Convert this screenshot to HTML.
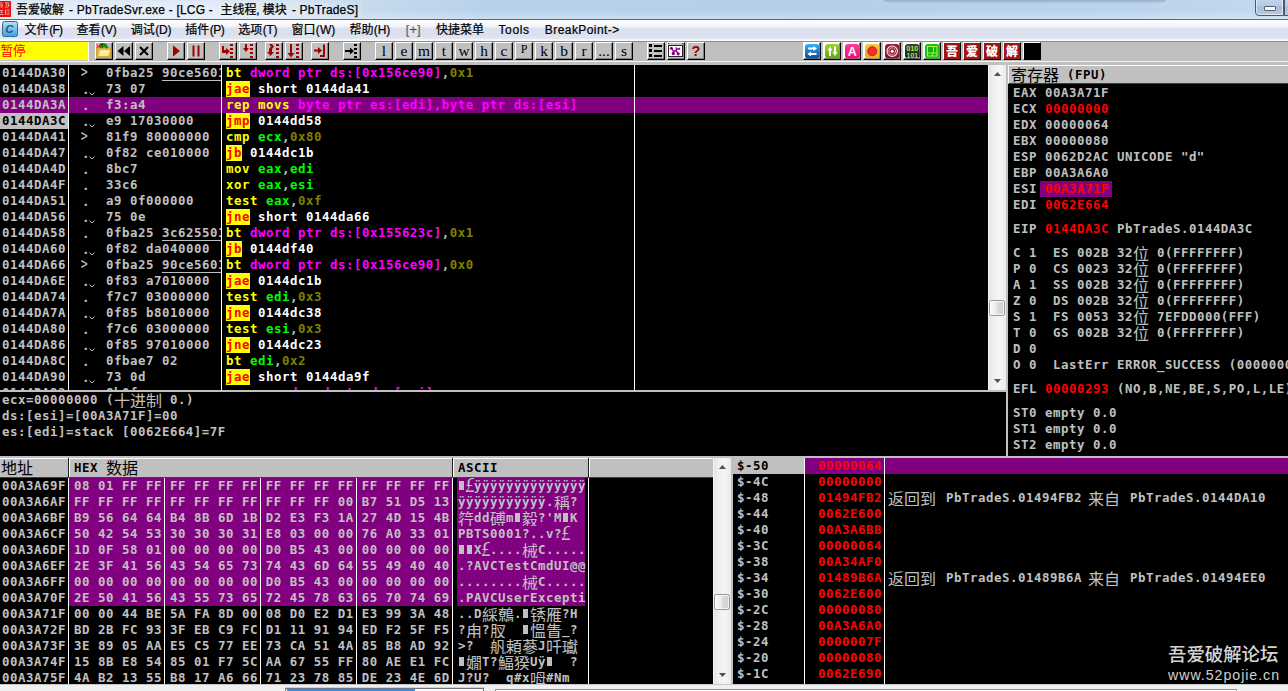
<!DOCTYPE html><html><head><meta charset="utf-8"><title>OllyDbg</title><style>
*{box-sizing:border-box;margin:0;padding:0}
html,body{width:1288px;height:691px;overflow:hidden;background:#c0c0c0}
body{position:relative;font-family:"Liberation Sans","Noto Sans CJK SC",sans-serif}
.abs{position:absolute}
.m{font-family:"DejaVu Sans Mono","Liberation Mono","Noto Sans CJK SC",monospace;font-weight:bold;font-size:12.4px;line-height:16px;white-space:pre;color:#c0c0c0;letter-spacing:0.5346px}
.row{position:absolute;left:0;height:16px;white-space:pre;overflow:hidden}
.cj{font-family:"Noto Sans CJK SC","WenQuanYi Zen Hei",sans-serif;font-weight:400;font-size:16px;display:inline-block;width:16px;text-align:center;line-height:16px;vertical-align:top;letter-spacing:0}
.pane{position:absolute;background:#000;overflow:hidden}
.y{color:#ff0}.mg{color:#f0f}.g{color:#0f0}.o{color:#808000}.w{color:#fff}.r{color:#f00}.k{color:#000}
.j{color:#f00;background:#ff0;display:inline-block;height:16px;vertical-align:top}
.hl{background:#800080}
.vl{position:absolute;width:1px;background:#fff}
.btn{position:absolute;top:42px;width:18px;height:18px;background:#c0c0c0;border:1px solid;border-color:#fff #000 #000 #fff;box-shadow:inset -1px -1px 0 #808080;overflow:hidden}
.btn svg{position:absolute;left:0;top:0}
.wf{background:#fff}
.lb{font-family:"Liberation Serif",serif;font-size:15.4px;line-height:16px;text-align:center;color:#000;width:16px;margin-top:-0.5px}
.sb{position:absolute;background:#f0f0f0}
</style></head><body>
<div class="abs" id="title" style="left:0;top:0;width:1288px;height:19px;background:linear-gradient(180deg,rgba(255,255,255,0) 0,rgba(255,255,255,0) 55%,rgba(255,255,255,.28) 100%),linear-gradient(90deg,#dde8f4 0,#d9e5f3 250px,#c6daee 370px,#b9d2eb 480px,#b4cfea 800px,#b9d3ec 1100px,#c3d9ee 1288px)"></div>
<div class="abs" style="left:884px;top:0;width:282px;height:3px;background:linear-gradient(180deg,rgba(140,160,190,.75),rgba(150,175,205,.25));border-radius:0 0 8px 8px/0 0 3px 3px"></div>
<div class="abs" style="left:0;top:19px;width:1288px;height:1px;background:#5f6a76"></div>
<svg class="abs" style="left:0;top:1px" width="11" height="16" viewBox="0 0 11 16"><rect x="-2" width="13" height="16" rx=".8" fill="#e61212"/><g fill="#f7a8a8" opacity=".9"><path d="M0 1.500h2.500v1H0zM0 3.500h3v1.200H0zM.5 5.500h2.500v1H.5zM5 1.200h4v1H5zM6 2.500h1.200v2H6zM8 2.800h1.200v3H8zM5 5.500h3v1H5zM0 9h3v1H0zM.5 10.500h2v1.500h-2zM0 13h3.500v1H0zM5 8.500h1.200v5.500H5zM7 8.500h2.500v1H7zM7.500 10.500h1.500v1.200H7.500zM7 12.800h2.500v1H7z"/></g></svg>
<div class="abs" style="left:14px;top:1px;width:348px;height:17px;background:radial-gradient(ellipse at center,rgba(255,255,255,.35) 0,rgba(255,255,255,.2) 60%,rgba(255,255,255,0) 100%)"></div>
<div class="abs" style="left:0;white-space:pre;font:12px 'Liberation Sans','Noto Sans CJK SC',sans-serif;top:0;height:20px;line-height:20px;color:#000;-webkit-text-stroke:0.25px #000"><span style="margin-left:16.000px;">吾爱破解</span><span style="margin-left:4.984px;letter-spacing:0.203px;">- PbTradeSvr.exe - [LCG -</span><span style="margin-left:7.500px;">主线程</span><span style="margin-left:-0.216px;">,</span><span style="margin-left:3.056px;">模块</span><span style="margin-left:5.184px;letter-spacing:0.186px;">- PbTradeS]</span></div>
<div class="abs" style="left:1255px;top:-4px;width:29px;height:20px;border:1px solid #4a5868;border-radius:0 0 0 4px;background:linear-gradient(180deg,#c6d8ec 0,#b5cbe4 50%,#a4bddb 51%,#b4cbe5 100%);box-shadow:inset 0 0 0 1px rgba(255,255,255,.6)"></div>
<div class="abs" style="left:1284px;top:-4px;width:8px;height:20px;border:1px solid #4a5868;background:linear-gradient(180deg,#c6d8ec 0,#b5cbe4 50%,#a4bddb 51%,#b4cbe5 100%)"></div>
<div class="abs" style="left:1264px;top:6px;width:12px;height:5px;background:#fff;border:1px solid #555e6a;border-radius:1px"></div>
<div class="abs menu" style="left:0;top:20px;width:1288px;height:19px;background:linear-gradient(180deg,#fff 0,#f1f3f9 7px,#dde0ee 8px,#dcdfed 15px,#e6e8f3 19px)">
<svg class="abs" style="left:2px;top:1px" width="16" height="17" viewBox="0 0 16 17"><defs><linearGradient id="cg" x1="0" y1="0" x2="0" y2="1"><stop offset="0" stop-color="#b4e2fa"/><stop offset="1" stop-color="#3d9fdc"/></linearGradient></defs><rect x=".5" y=".5" width="15" height="15" rx="2" fill="url(#cg)" stroke="#2a6f9f"/><text x="7.500" y="12" font-family="Liberation Sans" font-weight="bold" font-style="italic" font-size="11.500" text-anchor="middle" fill="#2c5878">C</text></svg>
<div class="abs" style="left:0;white-space:pre;font:12px 'Liberation Sans','Noto Sans CJK SC',sans-serif;top:1px;height:19px;line-height:19px;color:#000;-webkit-text-stroke:0.2px #000"><span style="margin-left:24.500px;">文件</span><span style="margin-left:0.784px;letter-spacing:-0.776px;">(F)</span><span style="margin-left:14.200px;">查看</span><span style="margin-left:0.584px;letter-spacing:-0.167px;">(V)</span><span style="margin-left:14.100px;">调试</span><span style="margin-left:0.584px;letter-spacing:-0.224px;">(D)</span><span style="margin-left:14.000px;">插件</span><span style="margin-left:0.384px;letter-spacing:-0.433px;">(P)</span><span style="margin-left:13.900px;">选项</span><span style="margin-left:0.484px;letter-spacing:-0.243px;">(T)</span><span style="margin-left:14.100px;">窗口</span><span style="margin-left:0.384px;letter-spacing:0.091px;">(W)</span><span style="margin-left:14.200px;">帮助</span><span style="margin-left:0.084px;letter-spacing:-0.057px;">(H)</span><span style="margin-left:15.500px;letter-spacing:0.604px;color:#808080;">[+]</span><span style="margin-left:14.700px;">快捷菜单</span><span style="margin-left:14.584px;letter-spacing:0.637px;">Tools</span><span style="margin-left:15.200px;letter-spacing:0.425px;">BreakPoint-&gt;</span></div>
</div>
<div class="abs" style="left:0;top:39px;width:1288px;height:2px;background:linear-gradient(180deg,#eff0f7,#fff)"></div>
<div class="abs" style="left:0;top:41px;width:1288px;height:24px;background:#c0c0c0"></div>
<div class="abs" style="left:0;top:41px;width:1288px;height:1px;background:#8c8c8c"></div>
<div class="abs" style="left:0;top:61px;width:1288px;height:1px;background:#f4f4f4"></div>
<div class="abs" style="left:0;top:42px;width:88px;height:18px;background:#ff0"></div>
<div class="abs" style="left:88px;top:42px;width:1px;height:19px;background:#fff"></div>
<div class="abs" style="left:0.5px;top:43px;height:18px;line-height:17px;font-size:12.6px;color:#f00;letter-spacing:0;white-space:pre">暂停</div>
<div class="btn " style="left:95px"><svg width="16" height="16" viewBox="0 0 16 16"><defs><linearGradient id="fo" x1="0" y1="0" x2="0" y2="1"><stop offset="0" stop-color="#fff8c0"/><stop offset="1" stop-color="#fbe27a"/></linearGradient></defs><rect x=".5" y="4.500" width="14.500" height="9.800" rx="1.500" fill="#e2b442" stroke="#c89a2c" stroke-width=".8"/><path d="M4.200 7.300h9.800l-2 5.800H2.200z" fill="url(#fo)"/><path d="M3 2.300C3 .6 4.500 0 6 .3c2.500-.8 6 .6 6 4.900H9.300C9.300 4 8.600 3.700 7.500 4.300c-.6 1-2 1.300-3 .6C3.500 4.400 3 3.500 3 2.300z" fill="#0e900e"/><rect x="5.200" y="1" width="1.200" height="1.200" fill="#000"/><path d="M5 3.800L2 3.400M2.200 3.400L.6 1.400M2.200 3.400L.6 5.200" stroke="#f00" stroke-width="1" fill="none"/></svg></div>
<div class="btn " style="left:115px"><svg width="16" height="16" viewBox="0 0 16 16"><path d="M7.5 3v10L1.5 8zM14 3v10L8 8z" fill="#000"/></svg></div>
<div class="btn " style="left:135px"><svg width="16" height="16" viewBox="0 0 16 16"><path d="M4 4l8 8M12 4l-8 8" stroke="#000" stroke-width="2"/></svg></div>
<div class="btn " style="left:167px"><svg width="16" height="16" viewBox="0 0 16 16"><path d="M5 2.5v11L12 8z" fill="#a00000"/></svg></div>
<div class="btn " style="left:187px"><svg width="16" height="16" viewBox="0 0 16 16"><rect x="4.5" y="2.5" width="2" height="11" fill="#a00000"/><rect x="9.5" y="2.5" width="2" height="11" fill="#a00000"/></svg></div>
<div class="btn " style="left:219px"><svg width="16" height="16" viewBox="0 0 16 16"><g fill="#a00000"><rect x="10" y="1" width="3" height="2"/><rect x="10" y="5" width="3" height="2"/><rect x="10" y="9" width="3" height="2"/><rect x="10" y="13" width="3" height="2"/></g><path d="M2 3h2v4h2V5l4 3.5L6 12v-2H2z" fill="#a00000"/></svg></div>
<div class="btn " style="left:239px"><svg width="16" height="16" viewBox="0 0 16 16"><g fill="#a00000"><rect x="10" y="1" width="3" height="2"/><rect x="10" y="5" width="3" height="2"/><rect x="10" y="9" width="3" height="2"/><rect x="10" y="13" width="3" height="2"/></g><path d="M5 1h2v4h2L6 9 3 5h2z" fill="#a00000"/></svg></div>
<div class="btn " style="left:265px"><svg width="16" height="16" viewBox="0 0 16 16"><g fill="#a00000"><rect x="10" y="1" width="3" height="2"/><rect x="10" y="5" width="3" height="2"/><rect x="10" y="9" width="3" height="2"/><rect x="10" y="13" width="3" height="2"/></g><path d="M3 1h3l2 2.5L6 6v3h2l-3.5 4L1 9h2V6l2-2.5z" fill="#a00000"/></svg></div>
<div class="btn " style="left:285px"><svg width="16" height="16" viewBox="0 0 16 16"><g fill="#a00000"><rect x="10" y="1" width="3" height="2"/><rect x="10" y="5" width="3" height="2"/><rect x="10" y="9" width="3" height="2"/><rect x="10" y="13" width="3" height="2"/></g><path d="M4 1h2v9h2.5L5 14.5 1.500 10H4z" fill="#a00000"/></svg></div>
<div class="btn " style="left:311px"><svg width="16" height="16" viewBox="0 0 16 16"><path d="M2 6.500h4v-2.500L10 7.500 6 11v-2.500H2z" fill="#a00000"/><path d="M12 1.500v11.500h-4" stroke="#a00000" stroke-width="2" fill="none"/></svg></div>
<div class="btn " style="left:343px"><svg width="16" height="16" viewBox="0 0 16 16"><g fill="#000"><rect x="10" y="1" width="3" height="2"/><rect x="10" y="5" width="3" height="2"/><rect x="10" y="9" width="3" height="2"/><rect x="10" y="13" width="3" height="2"/></g><path d="M1 7h5V4.500L10 8 6 11.500V9H1z" fill="#000"/></svg></div>
<div class="btn " style="left:375px"><div class="lb">l</div></div>
<div class="btn " style="left:395px"><div class="lb">e</div></div>
<div class="btn " style="left:415px"><div class="lb">m</div></div>
<div class="btn " style="left:435px"><div class="lb">t</div></div>
<div class="btn " style="left:455px"><div class="lb">w</div></div>
<div class="btn " style="left:475px"><div class="lb">h</div></div>
<div class="btn " style="left:495px"><div class="lb">c</div></div>
<div class="btn " style="left:515px"><div class="lb" style="font-size:12px;line-height:13px">P</div></div>
<div class="btn " style="left:535px"><div class="lb">k</div></div>
<div class="btn " style="left:555px"><div class="lb">b</div></div>
<div class="btn " style="left:575px"><div class="lb">r</div></div>
<div class="btn " style="left:595px"><div class="lb">...</div></div>
<div class="btn " style="left:615px"><div class="lb">s</div></div>
<div class="btn " style="left:647px"><svg width="16" height="16" viewBox="0 0 16 16"><g fill="#000"><rect x="1" y="1" width="3" height="3"/><rect x="6" y="2" width="8" height="2"/><rect x="1" y="6" width="3" height="3"/><rect x="6" y="7" width="8" height="2"/><rect x="1" y="11" width="3" height="3"/><rect x="6" y="12" width="8" height="2"/></g></svg></div>
<div class="btn " style="left:667px"><svg width="16" height="16" viewBox="0 0 16 16"><rect x="0" y="0" width="1" height="1" fill="#303030"/><rect x="14" y="0" width="1" height="1" fill="#303030"/><rect x=".5" y="2.500" width="14" height="11" fill="#fff" stroke="#282828"/><g fill="#8c008c"><circle cx="3.400" cy="5.200" r="1.500"/><rect x="3.800" y="9" width="3" height="3"/><circle cx="10.200" cy="10.800" r="1.600"/></g><path d="M3.400 5.200L5.300 8H8.300M5.300 8v2M8.300 8V4.200M8.300 6h3.200V4.800M8.300 8l2 2.800" stroke="#8c008c" stroke-width="1.300" fill="none"/></svg></div>
<div class="btn " style="left:687px"><div style="font:bold 14.500px/16px 'Liberation Sans',sans-serif;color:#a00000;text-align:center;width:16px;margin-top:0">?</div></div>
<div class="btn wf" style="left:803px"><svg width="16" height="16" viewBox="0 0 16 16"><defs><linearGradient id="b1" x1="0" y1="0" x2="0" y2="1"><stop offset="0" stop-color="#2fb4f4"/><stop offset="1" stop-color="#0a4a98"/></linearGradient></defs><rect x="1" y="1" width="14.500" height="14.500" rx="3" fill="url(#b1)"/><path d="M4 4.500h5.500V3L13 5.500 9.500 8V6.500H4zM12.500 10H7V8.500L3.500 11 7 13.500V12h5.500z" fill="#fff"/></svg></div>
<div class="btn wf" style="left:823px"><svg width="16" height="16" viewBox="0 0 16 16"><defs><linearGradient id="b2" x1="0" y1="0" x2="0" y2="1"><stop offset="0" stop-color="#9ed030"/><stop offset="1" stop-color="#62aa10"/></linearGradient></defs><rect x="1" y="1" width="14.500" height="14.500" rx="3" fill="url(#b2)"/><path d="M5 13V7.500H3.500L6 3.500l2.500 4H7V13zM10 3.500V9H8.500L11 13l2.500-4H12V3.500z" fill="#fff"/></svg></div>
<div class="btn wf" style="left:843px"><svg width="16" height="16" viewBox="0 0 16 16"><defs><linearGradient id="b3" x1="0" y1="0" x2="0" y2="1"><stop offset="0" stop-color="#ff3c96"/><stop offset="1" stop-color="#f4087a"/></linearGradient></defs><rect x="1" y="1" width="14.500" height="14.500" rx="3" fill="url(#b3)"/><text x="8.300" y="13" font-family="Liberation Sans" font-weight="bold" font-size="12.500" text-anchor="middle" fill="#fff">A</text></svg></div>
<div class="btn wf" style="left:863px"><svg width="16" height="16" viewBox="0 0 16 16"><defs><linearGradient id="b4" x1="0" y1="0" x2="0" y2="1"><stop offset="0" stop-color="#f8c838"/><stop offset="1" stop-color="#f0a820"/></linearGradient></defs><rect x="1" y="1" width="14.500" height="14.500" rx="3" fill="url(#b4)"/><circle cx="8.200" cy="8.200" r="5" fill="#d84a20"/><circle cx="8.200" cy="8.200" r="4.200" fill="none" stroke="#7a2010" stroke-width=".6"/><circle cx="8.200" cy="8.200" r="3.600" fill="#ff2a2a"/></svg></div>
<div class="btn wf" style="left:883px"><svg width="16" height="16" viewBox="0 0 16 16"><defs><linearGradient id="b5" x1="0" y1="0" x2="0" y2="1"><stop offset="0" stop-color="#a02038"/><stop offset="1" stop-color="#841428"/></linearGradient></defs><rect x="1" y="1" width="14.500" height="14.500" rx="3" fill="url(#b5)"/><circle cx="8.200" cy="8.200" r="5.200" fill="none" stroke="#fbeaea" stroke-width="1.100"/><circle cx="8.200" cy="8.200" r="3.300" fill="none" stroke="#fbeaea" stroke-width="1" stroke-dasharray="1.500 .6"/><circle cx="8.200" cy="8.200" r="1.500" fill="#fff"/></svg></div>
<div class="btn wf" style="left:903px"><svg width="16" height="16" viewBox="0 0 16 16"><defs><linearGradient id="b6" x1="0" y1="0" x2="0" y2="1"><stop offset="0" stop-color="#3c4246"/><stop offset="1" stop-color="#1c2024"/></linearGradient></defs><rect x="1" y="1" width="14.500" height="14.500" rx="3" fill="url(#b6)"/><text x="8.300" y="8" font-family="Liberation Sans" font-weight="bold" font-size="7.500" text-anchor="middle" fill="#a8ec48" textLength="11.500" lengthAdjust="spacingAndGlyphs">010</text><text x="8.300" y="15" font-family="Liberation Sans" font-weight="bold" font-size="7.500" text-anchor="middle" fill="#a8ec48" textLength="11.500" lengthAdjust="spacingAndGlyphs">101</text></svg></div>
<div class="btn wf" style="left:923px"><svg width="16" height="16" viewBox="0 0 16 16"><rect x="1" y="1" width="14.500" height="14.500" rx="3" fill="#10c810"/><rect x="3.500" y="3.500" width="9.500" height="9.500" fill="#14b414" stroke="#b0f040" stroke-width="1"/><path d="M9.500 3.500v6.500M3.500 10h9.500M8.200 10v3" stroke="#b0f040" stroke-width="1" fill="none"/></svg></div>
<div class="btn " style="left:943px"><div style="width:16px;height:16px;background:#a01414;color:#fff;font:900 12px/16px 'Noto Sans CJK SC',sans-serif;text-align:center">吾</div></div>
<div class="btn " style="left:963px"><div style="width:16px;height:16px;background:#a01414;color:#fff;font:900 12px/16px 'Noto Sans CJK SC',sans-serif;text-align:center">爱</div></div>
<div class="btn " style="left:983px"><div style="width:16px;height:16px;background:#a01414;color:#fff;font:900 12px/16px 'Noto Sans CJK SC',sans-serif;text-align:center">破</div></div>
<div class="btn " style="left:1003px"><div style="width:16px;height:16px;background:#a01414;color:#fff;font:900 12px/16px 'Noto Sans CJK SC',sans-serif;text-align:center">解</div></div>
<div class="btn " style="left:1023px"><div style="width:16px;height:16px;background:#000"></div></div>
<div class="pane" style="left:0;top:65px;width:988px;height:325px">
<div class="row m" style="left:2px;top:0px">0144DA30</div>
<div class="row m" style="left:79px;top:-1px;font-weight:normal;font-size:16px;width:12px;letter-spacing:0;transform:scaleX(.72);transform-origin:6px 0">&gt;</div>
<div class="row m" style="left:106px;top:0px;width:115px">0fba25 <span style="border-bottom:1px solid #c0c0c0;display:inline-block;height:16px">90ce5601</span></div>
<div class="row m" style="left:226px;top:0px"><span class="y">bt </span><span class="mg">dword ptr ds:[0x156ce90]</span>,<span class="o">0x1</span></div>
<div class="row m" style="left:2px;top:16px">0144DA38</div>
<div class="row m" style="left:82px;top:17px">.</div>
<svg class="abs" style="left:89px;top:27px" width="6" height="4" viewBox="0 0 6 4"><path d="M.5 .5L3 3L5.500 .5" stroke="#c0c0c0" stroke-width="1" fill="none"/></svg>
<div class="row m" style="left:106px;top:16px;width:115px">73 07</div>
<div class="row m" style="left:226px;top:16px"><span class="j">jae</span><span class="w"> short 0144da41</span></div>
<div class="abs hl" style="left:0;top:32px;width:989px;height:16px"></div>
<div class="row m" style="left:2px;top:32px">0144DA3A</div>
<div class="row m" style="left:82px;top:33px">.</div>
<div class="row m" style="left:106px;top:32px;width:115px">f3:a4</div>
<div class="row m" style="left:226px;top:32px"><span class="y">rep movs </span><span class="mg">byte ptr es:[edi],byte ptr ds:[esi]</span></div>
<div class="abs" style="left:0;top:48px;width:68px;height:16px;background:#c0c0c0"></div>
<div class="row m k" style="left:2px;top:48px">0144DA3C</div>
<div class="row m" style="left:82px;top:49px">.</div>
<svg class="abs" style="left:89px;top:59px" width="6" height="4" viewBox="0 0 6 4"><path d="M.5 .5L3 3L5.500 .5" stroke="#c0c0c0" stroke-width="1" fill="none"/></svg>
<div class="row m" style="left:106px;top:48px;width:115px">e9 17030000</div>
<div class="row m" style="left:226px;top:48px"><span class="j">jmp</span><span class="w"> 0144dd58</span></div>
<div class="row m" style="left:2px;top:64px">0144DA41</div>
<div class="row m" style="left:79px;top:63px;font-weight:normal;font-size:16px;width:12px;letter-spacing:0;transform:scaleX(.72);transform-origin:6px 0">&gt;</div>
<div class="row m" style="left:106px;top:64px;width:115px">81f9 80000000</div>
<div class="row m" style="left:226px;top:64px"><span class="y">cmp </span><span class="g">ecx</span>,<span class="o">0x80</span></div>
<div class="row m" style="left:2px;top:80px">0144DA47</div>
<div class="row m" style="left:82px;top:81px">.</div>
<svg class="abs" style="left:89px;top:91px" width="6" height="4" viewBox="0 0 6 4"><path d="M.5 .5L3 3L5.500 .5" stroke="#c0c0c0" stroke-width="1" fill="none"/></svg>
<div class="row m" style="left:106px;top:80px;width:115px">0f82 ce010000</div>
<div class="row m" style="left:226px;top:80px"><span class="j">jb</span><span class="w"> 0144dc1b</span></div>
<div class="row m" style="left:2px;top:96px">0144DA4D</div>
<div class="row m" style="left:82px;top:97px">.</div>
<div class="row m" style="left:106px;top:96px;width:115px">8bc7</div>
<div class="row m" style="left:226px;top:96px"><span class="y">mov </span><span class="g">eax</span>,<span class="g">edi</span></div>
<div class="row m" style="left:2px;top:112px">0144DA4F</div>
<div class="row m" style="left:82px;top:113px">.</div>
<div class="row m" style="left:106px;top:112px;width:115px">33c6</div>
<div class="row m" style="left:226px;top:112px"><span class="y">xor </span><span class="g">eax</span>,<span class="g">esi</span></div>
<div class="row m" style="left:2px;top:128px">0144DA51</div>
<div class="row m" style="left:82px;top:129px">.</div>
<div class="row m" style="left:106px;top:128px;width:115px">a9 0f000000</div>
<div class="row m" style="left:226px;top:128px"><span class="y">test </span><span class="g">eax</span>,<span class="o">0xf</span></div>
<div class="row m" style="left:2px;top:144px">0144DA56</div>
<div class="row m" style="left:82px;top:145px">.</div>
<svg class="abs" style="left:89px;top:155px" width="6" height="4" viewBox="0 0 6 4"><path d="M.5 .5L3 3L5.500 .5" stroke="#c0c0c0" stroke-width="1" fill="none"/></svg>
<div class="row m" style="left:106px;top:144px;width:115px">75 0e</div>
<div class="row m" style="left:226px;top:144px"><span class="j">jne</span><span class="w"> short 0144da66</span></div>
<div class="row m" style="left:2px;top:160px">0144DA58</div>
<div class="row m" style="left:82px;top:161px">.</div>
<div class="row m" style="left:106px;top:160px;width:115px">0fba25 <span style="border-bottom:1px solid #c0c0c0;display:inline-block;height:16px">3c625501</span></div>
<div class="row m" style="left:226px;top:160px"><span class="y">bt </span><span class="mg">dword ptr ds:[0x155623c]</span>,<span class="o">0x1</span></div>
<div class="row m" style="left:2px;top:176px">0144DA60</div>
<div class="row m" style="left:82px;top:177px">.</div>
<svg class="abs" style="left:89px;top:187px" width="6" height="4" viewBox="0 0 6 4"><path d="M.5 .5L3 3L5.500 .5" stroke="#c0c0c0" stroke-width="1" fill="none"/></svg>
<div class="row m" style="left:106px;top:176px;width:115px">0f82 da040000</div>
<div class="row m" style="left:226px;top:176px"><span class="j">jb</span><span class="w"> 0144df40</span></div>
<div class="row m" style="left:2px;top:192px">0144DA66</div>
<div class="row m" style="left:79px;top:191px;font-weight:normal;font-size:16px;width:12px;letter-spacing:0;transform:scaleX(.72);transform-origin:6px 0">&gt;</div>
<div class="row m" style="left:106px;top:192px;width:115px">0fba25 <span style="border-bottom:1px solid #c0c0c0;display:inline-block;height:16px">90ce5601</span></div>
<div class="row m" style="left:226px;top:192px"><span class="y">bt </span><span class="mg">dword ptr ds:[0x156ce90]</span>,<span class="o">0x0</span></div>
<div class="row m" style="left:2px;top:208px">0144DA6E</div>
<div class="row m" style="left:82px;top:209px">.</div>
<svg class="abs" style="left:89px;top:219px" width="6" height="4" viewBox="0 0 6 4"><path d="M.5 .5L3 3L5.500 .5" stroke="#c0c0c0" stroke-width="1" fill="none"/></svg>
<div class="row m" style="left:106px;top:208px;width:115px">0f83 a7010000</div>
<div class="row m" style="left:226px;top:208px"><span class="j">jae</span><span class="w"> 0144dc1b</span></div>
<div class="row m" style="left:2px;top:224px">0144DA74</div>
<div class="row m" style="left:82px;top:225px">.</div>
<div class="row m" style="left:106px;top:224px;width:115px">f7c7 03000000</div>
<div class="row m" style="left:226px;top:224px"><span class="y">test </span><span class="g">edi</span>,<span class="o">0x3</span></div>
<div class="row m" style="left:2px;top:240px">0144DA7A</div>
<div class="row m" style="left:82px;top:241px">.</div>
<svg class="abs" style="left:89px;top:251px" width="6" height="4" viewBox="0 0 6 4"><path d="M.5 .5L3 3L5.500 .5" stroke="#c0c0c0" stroke-width="1" fill="none"/></svg>
<div class="row m" style="left:106px;top:240px;width:115px">0f85 b8010000</div>
<div class="row m" style="left:226px;top:240px"><span class="j">jne</span><span class="w"> 0144dc38</span></div>
<div class="row m" style="left:2px;top:256px">0144DA80</div>
<div class="row m" style="left:82px;top:257px">.</div>
<div class="row m" style="left:106px;top:256px;width:115px">f7c6 03000000</div>
<div class="row m" style="left:226px;top:256px"><span class="y">test </span><span class="g">esi</span>,<span class="o">0x3</span></div>
<div class="row m" style="left:2px;top:272px">0144DA86</div>
<div class="row m" style="left:82px;top:273px">.</div>
<svg class="abs" style="left:89px;top:283px" width="6" height="4" viewBox="0 0 6 4"><path d="M.5 .5L3 3L5.500 .5" stroke="#c0c0c0" stroke-width="1" fill="none"/></svg>
<div class="row m" style="left:106px;top:272px;width:115px">0f85 97010000</div>
<div class="row m" style="left:226px;top:272px"><span class="j">jne</span><span class="w"> 0144dc23</span></div>
<div class="row m" style="left:2px;top:288px">0144DA8C</div>
<div class="row m" style="left:82px;top:289px">.</div>
<div class="row m" style="left:106px;top:288px;width:115px">0fbae7 02</div>
<div class="row m" style="left:226px;top:288px"><span class="y">bt </span><span class="g">edi</span>,<span class="o">0x2</span></div>
<div class="row m" style="left:2px;top:304px">0144DA90</div>
<div class="row m" style="left:82px;top:305px">.</div>
<svg class="abs" style="left:89px;top:315px" width="6" height="4" viewBox="0 0 6 4"><path d="M.5 .5L3 3L5.500 .5" stroke="#c0c0c0" stroke-width="1" fill="none"/></svg>
<div class="row m" style="left:106px;top:304px;width:115px">73 0d</div>
<div class="row m" style="left:226px;top:304px"><span class="j">jae</span><span class="w"> short 0144da9f</span></div>
<div class="row m" style="left:2px;top:320px">0144DA92</div>
<div class="row m" style="left:82px;top:321px">.</div>
<div class="row m" style="left:106px;top:320px;width:115px">8b0f</div>
<div class="row m" style="left:226px;top:320px"><span class="y">mov </span><span class="g">ecx</span>,<span class="mg">dword ptr ds:[esi]</span></div>
<div class="vl" style="left:68px;top:0;height:325px"></div>
<div class="vl" style="left:221px;top:0;height:325px"></div>
<div class="vl" style="left:634px;top:0;height:325px"></div>
</div>
<div class="sb" style="left:988px;top:65px;width:18px;height:325px;background:linear-gradient(90deg,#fbfbfb 0,#e6e6e6 1.5px,#efefef 30%,#f5f5f5 65%,#eaeaea)"></div>
<svg class="abs" style="left:994px;top:72px" width="7" height="4" viewBox="0 0 7 4"><path d="M0 4L3.500 0L7 4z" fill="#505050"/></svg>
<svg class="abs" style="left:994px;top:379px" width="7" height="4" viewBox="0 0 7 4"><path d="M0 0L3.500 4L7 0z" fill="#505050"/></svg>
<div class="abs" style="left:989px;top:300px;width:16px;height:16px;border:1px solid #959595;border-radius:2.500px;background:linear-gradient(90deg,#f8f8f8 0,#ececec 45%,#dcdcdc 50%,#cfcfcf 100%);box-shadow:inset 0 0 0 1px rgba(255,255,255,.7)"></div>
<div class="abs" style="left:0;top:390px;width:1008px;height:2px;background:#c0c0c0"></div>
<div class="abs" style="left:1006px;top:65px;width:2px;height:393px;background:#c0c0c0"></div>
<div class="pane" style="left:0;top:392px;width:1006px;height:64px">
<div class="row m" style="left:2px;top:0">ecx=00000000 (<span class="cj">十</span><span class="cj">进</span><span class="cj">制</span> 0.)</div>
<div class="row m" style="left:2px;top:16px">ds:[esi]=[00A3A71F]=00</div>
<div class="row m" style="left:2px;top:32px">es:[edi]=stack [0062E664]=7F</div>
</div>
<div class="pane" style="left:1008px;top:65px;width:280px;height:391px">
<div class="abs" style="left:0;top:0;width:280px;height:19px;background:#c0c0c0;border-top:1px solid #fff;border-left:1px solid #fff;border-bottom:1px solid #404040"></div>
<div class="row m k" style="left:3px;top:1px;height:18px;line-height:18px"><span class="cj">寄</span><span class="cj">存</span><span class="cj">器</span> (FPU)</div>
<div class="row m" style="left:5px;top:20px">EAX 00A3A71F</div>
<div class="row m" style="left:5px;top:36px">ECX <span class="r">00000000</span></div>
<div class="row m" style="left:5px;top:52px">EDX 00000064</div>
<div class="row m" style="left:5px;top:68px">EBX 00000080</div>
<div class="row m" style="left:5px;top:84px">ESP 0062D2AC UNICODE &quot;d&quot;</div>
<div class="row m" style="left:5px;top:100px">EBP 00A3A6A0</div>
<div class="abs hl" style="left:32px;top:116px;width:72px;height:16px"></div>
<div class="row m" style="left:5px;top:116px">ESI <span class="r">00A3A71F</span></div>
<div class="row m" style="left:5px;top:132px">EDI <span class="r">0062E664</span></div>
<div class="row m" style="left:5px;top:156px">EIP <span class="r">0144DA3C</span> PbTradeS.0144DA3C</div>
<div class="row m" style="left:5px;top:180px">C 1  ES 002B 32<span class="cj">位</span> 0(FFFFFFFF)</div>
<div class="row m" style="left:5px;top:196px">P 0  CS 0023 32<span class="cj">位</span> 0(FFFFFFFF)</div>
<div class="row m" style="left:5px;top:212px">A 1  SS 002B 32<span class="cj">位</span> 0(FFFFFFFF)</div>
<div class="row m" style="left:5px;top:228px">Z 0  DS 002B 32<span class="cj">位</span> 0(FFFFFFFF)</div>
<div class="row m" style="left:5px;top:244px">S 1  FS 0053 32<span class="cj">位</span> 7EFDD000(FFF)</div>
<div class="row m" style="left:5px;top:260px">T 0  GS 002B 32<span class="cj">位</span> 0(FFFFFFFF)</div>
<div class="row m" style="left:5px;top:276px">D 0</div>
<div class="row m" style="left:5px;top:292px">O 0  LastErr ERROR_SUCCESS (00000000)</div>
<div class="row m" style="left:5px;top:316px">EFL <span class="r">00000293</span> (NO,B,NE,BE,S,PO,L,LE)</div>
<div class="row m" style="left:5px;top:340px">ST0 empty 0.0</div>
<div class="row m" style="left:5px;top:356px">ST1 empty 0.0</div>
<div class="row m" style="left:5px;top:372px">ST2 empty 0.0</div>
</div>
<div class="abs" style="left:0;top:456px;width:1288px;height:2px;background:#c0c0c0"></div>
<div class="pane" style="left:0;top:457px;width:713px;height:227px">
<div class="abs" style="left:0;top:0;width:714px;height:21px;background:#c0c0c0;border-top:1px solid #c0c0c0"></div>
<div class="abs" style="left:0;top:1px;width:714px;height:1px;background:#fff"></div>
<div class="abs" style="left:0;top:20px;width:714px;height:1px;background:#404040"></div>
<div class="abs" style="left:68px;top:1px;width:1px;height:19px;background:#202020"></div>
<div class="abs" style="left:69px;top:1px;width:1px;height:19px;background:#fff"></div>
<div class="abs" style="left:452px;top:1px;width:1px;height:19px;background:#202020"></div>
<div class="abs" style="left:453px;top:1px;width:1px;height:19px;background:#fff"></div>
<div class="abs" style="left:588px;top:1px;width:1px;height:19px;background:#202020"></div>
<div class="abs" style="left:589px;top:1px;width:1px;height:19px;background:#fff"></div>
<div class="row m k" style="left:1px;top:2px;height:18px;line-height:18px"><span class="cj">地</span><span class="cj">址</span></div>
<div class="row m k" style="left:74px;top:2px;height:18px;line-height:18px">HEX <span class="cj">数</span><span class="cj">据</span></div>
<div class="row m k" style="left:458px;top:2px;height:18px;line-height:18px">ASCII</div>
<div class="abs hl" style="left:69px;top:21px;width:384px;height:128px"></div>
<div class="abs hl" style="left:457px;top:21px;width:128px;height:128px"></div>
<div class="row m" style="left:2px;top:21px">00A3A69F</div>
<div class="row m" style="left:74px;top:21px">08 01 FF FF FF FF FF FF FF FF FF FF FF FF FF FF</div>
<div class="row m" style="left:458px;top:21px"><span style="display:inline-block;width:8px;height:16px;vertical-align:top;position:relative"><span style="position:absolute;left:1px;top:3px;width:5px;height:9px;background:#c0c0c0"></span></span></div>
<div class="row m" style="left:466px;top:21px"><span style="display:inline-block;width:8px;height:16px;vertical-align:top;font-family:'Liberation Serif',serif;font-weight:normal;font-style:italic;font-size:21px;line-height:14px;overflow:visible;letter-spacing:0"><span style="display:inline-block;margin-left:-1px">£</span></span></div>
<div class="row m" style="left:474px;top:21px">ÿÿÿÿÿÿÿÿÿÿÿÿÿÿ</div>
<div class="row m" style="left:2px;top:37px">00A3A6AF</div>
<div class="row m" style="left:74px;top:37px">FF FF FF FF FF FF FF FF FF FF FF 00 B7 51 D5 13</div>
<div class="row m" style="left:458px;top:37px">ÿÿÿÿÿÿÿÿÿÿÿ.<span class="cj">稱</span>?</div>
<div class="row m" style="left:2px;top:53px">00A3A6BF</div>
<div class="row m" style="left:74px;top:53px">B9 56 64 64 B4 8B 6D 1B D2 E3 F3 1A 27 4D 15 4B</div>
<div class="row m" style="left:458px;top:53px"><span class="cj">筕</span>dd<span class="cj">磗</span>m<span style="display:inline-block;width:8px;height:16px;vertical-align:top;position:relative"><span style="position:absolute;left:1px;top:3px;width:5px;height:9px;background:#c0c0c0"></span></span><span class="cj">毅</span>?&#x27;M<span style="display:inline-block;width:8px;height:16px;vertical-align:top;position:relative"><span style="position:absolute;left:1px;top:3px;width:5px;height:9px;background:#c0c0c0"></span></span>K</div>
<div class="row m" style="left:2px;top:69px">00A3A6CF</div>
<div class="row m" style="left:74px;top:69px">50 42 54 53 30 30 30 31 E8 03 00 00 76 A0 33 01</div>
<div class="row m" style="left:458px;top:69px">PBTS0001?..v?</div>
<div class="row m" style="left:562px;top:69px"><span style="display:inline-block;width:8px;height:16px;vertical-align:top;font-family:'Liberation Serif',serif;font-weight:normal;font-style:italic;font-size:21px;line-height:14px;overflow:visible;letter-spacing:0"><span style="display:inline-block;margin-left:-1px">£</span></span></div>
<div class="row m" style="left:2px;top:85px">00A3A6DF</div>
<div class="row m" style="left:74px;top:85px">1D 0F 58 01 00 00 00 00 D0 B5 43 00 00 00 00 00</div>
<div class="row m" style="left:458px;top:85px"><span style="display:inline-block;width:8px;height:16px;vertical-align:top;position:relative"><span style="position:absolute;left:1px;top:3px;width:5px;height:9px;background:#c0c0c0"></span></span><span style="display:inline-block;width:8px;height:16px;vertical-align:top;position:relative"><span style="position:absolute;left:1px;top:3px;width:5px;height:9px;background:#c0c0c0"></span></span>X</div>
<div class="row m" style="left:482px;top:85px"><span style="display:inline-block;width:8px;height:16px;vertical-align:top;font-family:'Liberation Serif',serif;font-weight:normal;font-style:italic;font-size:21px;line-height:14px;overflow:visible;letter-spacing:0"><span style="display:inline-block;margin-left:-1px">£</span></span></div>
<div class="row m" style="left:490px;top:85px">....<span class="cj">械</span>C.....</div>
<div class="row m" style="left:2px;top:101px">00A3A6EF</div>
<div class="row m" style="left:74px;top:101px">2E 3F 41 56 43 54 65 73 74 43 6D 64 55 49 40 40</div>
<div class="row m" style="left:458px;top:101px">.?AVCTestCmdUI@@</div>
<div class="row m" style="left:2px;top:117px">00A3A6FF</div>
<div class="row m" style="left:74px;top:117px">00 00 00 00 00 00 00 00 D0 B5 43 00 00 00 00 00</div>
<div class="row m" style="left:458px;top:117px">........<span class="cj">械</span>C.....</div>
<div class="row m" style="left:2px;top:133px">00A3A70F</div>
<div class="row m" style="left:74px;top:133px">2E 50 41 56 43 55 73 65 72 45 78 63 65 70 74 69</div>
<div class="row m" style="left:458px;top:133px">.PAVCUserExcepti</div>
<div class="row m" style="left:2px;top:149px">00A3A71F</div>
<div class="row m" style="left:74px;top:149px">00 00 44 BE 5A FA 8D 00 08 D0 E2 D1 E3 99 3A 48</div>
<div class="row m" style="left:458px;top:149px">..D<span class="cj">綵</span><span class="cj">鷯</span>.<span style="display:inline-block;width:8px;height:16px;vertical-align:top;position:relative"><span style="position:absolute;left:1px;top:3px;width:5px;height:9px;background:#c0c0c0"></span></span><span class="cj">锈</span><span class="cj">雁</span>?H</div>
<div class="row m" style="left:2px;top:165px">00A3A72F</div>
<div class="row m" style="left:74px;top:165px">BD 2B FC 93 3F EB C9 FC D1 11 91 94 ED F2 5F F5</div>
<div class="row m" style="left:458px;top:165px">?<span class="cj">甪</span>?<span class="cj">肞</span>  <span style="display:inline-block;width:8px;height:16px;vertical-align:top;position:relative"><span style="position:absolute;left:1px;top:3px;width:5px;height:9px;background:#c0c0c0"></span></span><span class="cj">慍</span><span class="cj">眚</span>_?</div>
<div class="row m" style="left:2px;top:181px">00A3A73F</div>
<div class="row m" style="left:74px;top:181px">3E 89 05 AA E5 C5 77 EE 73 CA 51 4A 85 B8 AD 92</div>
<div class="row m" style="left:458px;top:181px">&gt;?  <span class="cj">舤</span><span class="cj">頼</span><span class="cj">蔘</span>J<span class="cj">吀</span><span class="cj">瓛</span></div>
<div class="row m" style="left:2px;top:197px">00A3A74F</div>
<div class="row m" style="left:74px;top:197px">15 8B E8 54 85 01 F7 5C AA 67 55 FF 80 AE E1 FC</div>
<div class="row m" style="left:458px;top:197px"><span style="display:inline-block;width:8px;height:16px;vertical-align:top;position:relative"><span style="position:absolute;left:1px;top:3px;width:5px;height:9px;background:#c0c0c0"></span></span><span class="cj">嫺</span>T?<span class="cj">鰏</span><span class="cj">猤</span>Uÿ<span style="display:inline-block;width:8px;height:16px;vertical-align:top;position:relative"><span style="position:absolute;left:1px;top:3px;width:5px;height:9px;background:#c0c0c0"></span></span>  ?</div>
<div class="row m" style="left:2px;top:213px">00A3A75F</div>
<div class="row m" style="left:74px;top:213px">4A B2 13 55 B8 17 A6 66 71 23 78 85 DE 23 4E 6D</div>
<div class="row m" style="left:458px;top:213px">J?U?  q#x<span class="cj">呣</span>#Nm</div>
<div class="vl" style="left:68px;top:21px;height:207px"></div>
<div class="vl" style="left:164px;top:21px;height:207px"></div>
<div class="vl" style="left:260px;top:21px;height:207px"></div>
<div class="vl" style="left:356px;top:21px;height:207px"></div>
<div class="vl" style="left:452px;top:21px;height:207px"></div>
<div class="vl" style="left:588px;top:21px;height:207px"></div>
</div>
<div class="sb" style="left:713px;top:458px;width:18px;height:226px;background:linear-gradient(90deg,#fbfbfb 0,#e6e6e6 1.5px,#efefef 30%,#f5f5f5 65%,#eaeaea)"></div>
<svg class="abs" style="left:719px;top:465px" width="7" height="4" viewBox="0 0 7 4"><path d="M0 4L3.500 0L7 4z" fill="#505050"/></svg>
<svg class="abs" style="left:719px;top:673px" width="7" height="4" viewBox="0 0 7 4"><path d="M0 0L3.500 4L7 0z" fill="#505050"/></svg>
<div class="abs" style="left:714px;top:594px;width:16px;height:16px;border:1px solid #959595;border-radius:2.500px;background:linear-gradient(90deg,#f8f8f8 0,#ececec 45%,#dcdcdc 50%,#cfcfcf 100%);box-shadow:inset 0 0 0 1px rgba(255,255,255,.7)"></div>
<div class="abs" style="left:731px;top:457px;width:2px;height:227px;background:#c0c0c0"></div>
<div class="pane" style="left:733px;top:458px;width:555px;height:226px">
<div class="abs hl" style="left:72px;top:0;width:483px;height:16px"></div>
<div class="abs" style="left:0;top:0;width:72px;height:16px;background:#c0c0c0"></div>
<div class="row m k" style="left:4px;top:0px">$-50</div>
<div class="row m r" style="left:85px;top:0px">00000064</div>
<div class="row m" style="left:4px;top:16px">$-4C</div>
<div class="row m r" style="left:85px;top:16px">00000000</div>
<div class="row m" style="left:4px;top:32px">$-48</div>
<div class="row m r" style="left:85px;top:32px">01494FB2</div>
<div class="row m" style="left:155px;top:32px"><span class="cj">返</span><span class="cj">回</span><span class="cj">到</span></div>
<div class="row m" style="left:213px;top:32px">PbTradeS.01494FB2</div>
<div class="row m" style="left:355px;top:32px"><span class="cj">来</span><span class="cj">自</span></div>
<div class="row m" style="left:397px;top:32px">PbTradeS.0144DA10</div>
<div class="row m" style="left:4px;top:48px">$-44</div>
<div class="row m r" style="left:85px;top:48px">0062E600</div>
<div class="row m" style="left:4px;top:64px">$-40</div>
<div class="row m r" style="left:85px;top:64px">00A3A6BB</div>
<div class="row m" style="left:4px;top:80px">$-3C</div>
<div class="row m r" style="left:85px;top:80px">00000064</div>
<div class="row m" style="left:4px;top:96px">$-38</div>
<div class="row m r" style="left:85px;top:96px">00A34AF0</div>
<div class="row m" style="left:4px;top:112px">$-34</div>
<div class="row m r" style="left:85px;top:112px">01489B6A</div>
<div class="row m" style="left:155px;top:112px"><span class="cj">返</span><span class="cj">回</span><span class="cj">到</span></div>
<div class="row m" style="left:213px;top:112px">PbTradeS.01489B6A</div>
<div class="row m" style="left:355px;top:112px"><span class="cj">来</span><span class="cj">自</span></div>
<div class="row m" style="left:397px;top:112px">PbTradeS.01494EE0</div>
<div class="row m" style="left:4px;top:128px">$-30</div>
<div class="row m r" style="left:85px;top:128px">0062E600</div>
<div class="row m" style="left:4px;top:144px">$-2C</div>
<div class="row m r" style="left:85px;top:144px">00000080</div>
<div class="row m" style="left:4px;top:160px">$-28</div>
<div class="row m r" style="left:85px;top:160px">00A3A6A0</div>
<div class="row m" style="left:4px;top:176px">$-24</div>
<div class="row m r" style="left:85px;top:176px">0000007F</div>
<div class="row m" style="left:4px;top:192px">$-20</div>
<div class="row m r" style="left:85px;top:192px">00000080</div>
<div class="row m" style="left:4px;top:208px">$-1C</div>
<div class="row m r" style="left:85px;top:208px">0062E690</div>
<div class="row m" style="left:4px;top:224px">$-18</div>
<div class="row m r" style="left:85px;top:224px">0062E674</div>
<div class="vl" style="left:71px;top:0;height:227px"></div>
<div class="vl" style="left:151px;top:0;height:227px"></div>
<div class="abs" id="wm1" style="left:435px;top:183px;height:24px;font:500 18.4px/24px 'Noto Sans CJK SC',sans-serif;color:#d4d4d4;white-space:pre">吾爱破解论坛</div>
<div class="abs" id="wm2" style="left:435px;top:207.5px;height:18px;font:14.2px/18px 'Liberation Sans',sans-serif;color:#d0d0d0;white-space:pre;letter-spacing:0.959px">www.52pojie.cn</div>
</div>
<div class="abs" style="left:0;top:684px;width:1288px;height:7px;background:#f0f0f0"></div>
<div class="abs" style="left:0;top:684px;width:1288px;height:1px;background:#c8c8c8"></div>
<div class="abs" style="left:285px;top:687px;width:199px;height:1px;background:#d0d4d8"></div>
<div class="abs" style="left:285px;top:688px;width:199px;height:6px;background:#fff;border:1px solid #6e7884"></div>
<div class="abs" style="left:287px;top:689px;width:128px;height:2px;background:#2f8fe8"></div>
<div class="abs" style="left:495px;top:689px;width:742px;height:6px;background:#fff;border:1px solid #8a929c"></div>
</body></html>
